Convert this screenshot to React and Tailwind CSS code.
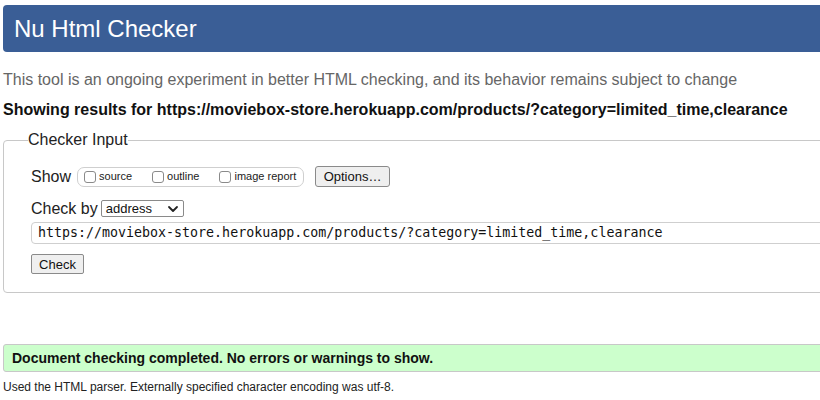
import React from 'react';

const url = 'https://moviebox-store.herokuapp.com/products/?category=limited_time,clearance';

function Box({ label }) {
    return (
        <label className="flex items-center gap-[3px]">
            <span className="w-[12px] h-[12px] border border-[#8a8a8a] rounded-[3px] bg-white" />
            <span className="text-[11px] leading-[13px] text-[#222]">{label}</span>
        </label>
    );
}

export default function App() {
    return (
        <div className="w-[820px] h-[400px] overflow-hidden bg-white text-black" style={{ fontFamily: '"Liberation Sans", Arial, sans-serif' }}>
            <div className="w-[880px] pl-[3px]">
                {/* Title bar */}
                <h1 className="mt-[5px] h-[47px] bg-[#3a5e96] rounded-[4px] flex items-center pl-[11px] text-white text-[24px] leading-[28px]">
                    Nu Html Checker
                </h1>

                <p className="mt-[19px] text-[16px] leading-[18px] text-[#666]">
                    This tool is an ongoing experiment in better HTML checking, and its behavior remains subject to change
                </p>
                <p className="mt-[12px] text-[16px] leading-[18px] font-bold text-[#111]">
                    Showing results for {url}
                </p>

                {/* Checker input */}
                <fieldset className="mt-[12px] border border-[#c8c8c8] rounded-[4px] pl-[24px] pb-[16px]">
                    <legend className="text-[16px] leading-[18px] px-0 text-[#222]">Checker Input</legend>

                    <div className="pl-[3px]">
                        <div className="mt-[17px] h-[21px] flex items-center">
                            <span className="text-[16px] leading-[18px] text-[#222]">Show</span>
                            <div className="ml-[6px] h-[20px] w-[227px] border border-[#cfcfcf] rounded-[7px] flex items-center pl-[6px] gap-[20px]">
                                <Box label="source" />
                                <Box label="outline" />
                                <Box label="image report" />
                            </div>
                            <button className="ml-[11px] h-[21px] w-[75px] bg-[#efefef] border border-[#8a8a8a] rounded-[3px] text-[13px] leading-[15px] text-[#111]">
                                Options…
                            </button>
                        </div>

                        <div className="mt-[13px] h-[17px] flex items-center">
                            <span className="text-[16px] leading-[18px] text-[#222]">Check by</span>
                            <div className="ml-[3px] h-[17px] w-[83px] border border-[#8a8a8a] rounded-[2px] bg-white flex items-center pl-[4px] pr-[3px] justify-between">
                                <span className="text-[13px] leading-[15px] text-[#111]">address</span>
                                <svg width="12" height="8" viewBox="0 0 12 8" className="mr-[1px]">
                                    <path d="M2 2 L6 6 L10 2" fill="none" stroke="#222" strokeWidth="1.8" strokeLinecap="round" strokeLinejoin="round" />
                                </svg>
                            </div>
                        </div>

                        <div className="mt-[5px] h-[22px] w-[820px] border border-[#cfcfcf] rounded-[4px] flex items-center pl-[6px]">
                            <span className="text-[13.3px] leading-[16px] text-[#111]" style={{ fontFamily: '"DejaVu Sans Mono", monospace' }}>
                                {url}
                            </span>
                        </div>

                        <button className="mt-[10px] h-[20px] w-[53px] bg-[#efefef] border border-[#8a8a8a] rounded-[2px] text-[13px] leading-[15px] text-[#111]">
                            Check
                        </button>
                    </div>
                </fieldset>

                {/* Result */}
                <div className="mt-[51px] h-[28px] bg-[#ccffcc] border border-[#c8c8c8] rounded-[3px] flex items-center pl-[8px]">
                    <span className="text-[14px] leading-[16px] font-bold text-[#111]">
                        Document checking completed. No errors or warnings to show.
                    </span>
                </div>

                <p className="mt-[8px] text-[12px] leading-[14px] text-[#222]">
                    Used the HTML parser. Externally specified character encoding was utf-8.
                </p>
            </div>
        </div>
    );
}
